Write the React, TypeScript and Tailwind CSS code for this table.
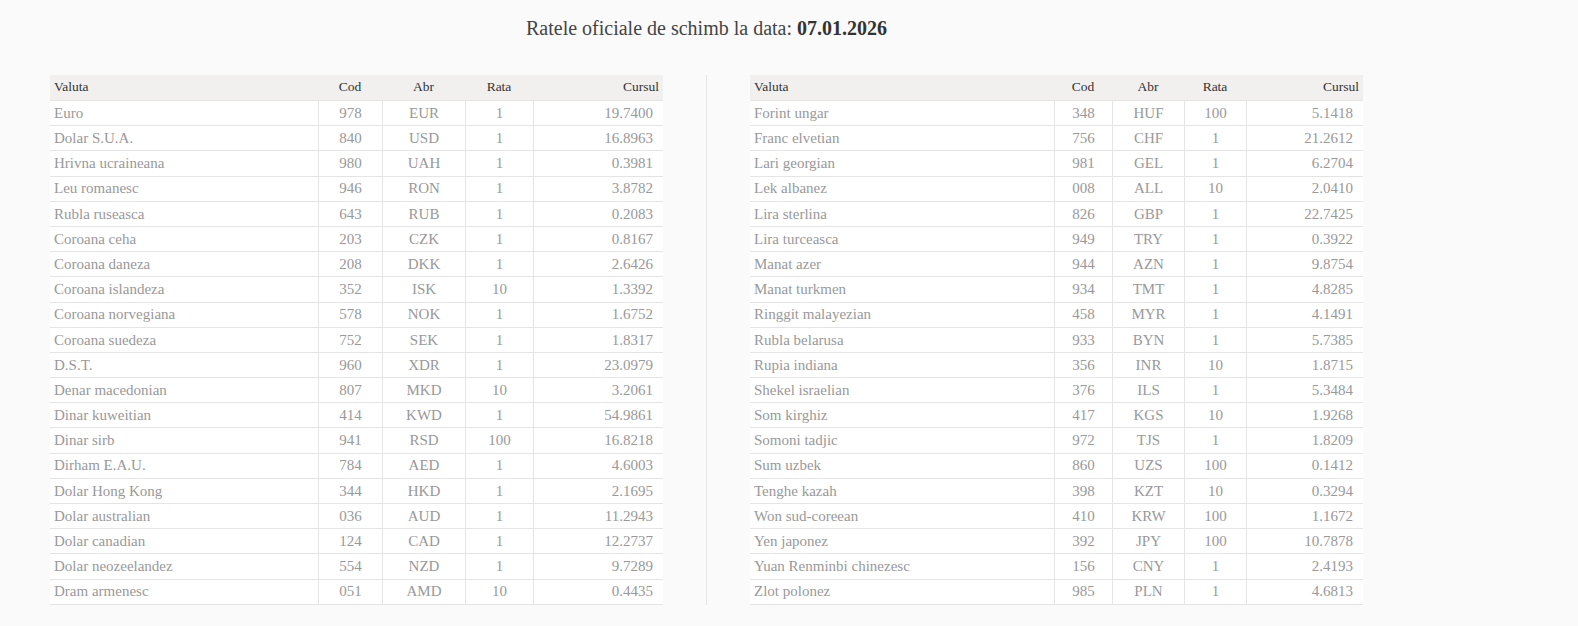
import React from 'react'

type Rate = [string, string, string, string, string]

const left: Rate[] = [
  ['Euro', '978', 'EUR', '1', '19.7400'],
  ['Dolar S.U.A.', '840', 'USD', '1', '16.8963'],
  ['Hrivna ucraineana', '980', 'UAH', '1', '0.3981'],
  ['Leu romanesc', '946', 'RON', '1', '3.8782'],
  ['Rubla ruseasca', '643', 'RUB', '1', '0.2083'],
  ['Coroana ceha', '203', 'CZK', '1', '0.8167'],
  ['Coroana daneza', '208', 'DKK', '1', '2.6426'],
  ['Coroana islandeza', '352', 'ISK', '10', '1.3392'],
  ['Coroana norvegiana', '578', 'NOK', '1', '1.6752'],
  ['Coroana suedeza', '752', 'SEK', '1', '1.8317'],
  ['D.S.T.', '960', 'XDR', '1', '23.0979'],
  ['Denar macedonian', '807', 'MKD', '10', '3.2061'],
  ['Dinar kuweitian', '414', 'KWD', '1', '54.9861'],
  ['Dinar sirb', '941', 'RSD', '100', '16.8218'],
  ['Dirham E.A.U.', '784', 'AED', '1', '4.6003'],
  ['Dolar Hong Kong', '344', 'HKD', '1', '2.1695'],
  ['Dolar australian', '036', 'AUD', '1', '11.2943'],
  ['Dolar canadian', '124', 'CAD', '1', '12.2737'],
  ['Dolar neozeelandez', '554', 'NZD', '1', '9.7289'],
  ['Dram armenesc', '051', 'AMD', '10', '0.4435'],
]

const right: Rate[] = [
  ['Forint ungar', '348', 'HUF', '100', '5.1418'],
  ['Franc elvetian', '756', 'CHF', '1', '21.2612'],
  ['Lari georgian', '981', 'GEL', '1', '6.2704'],
  ['Lek albanez', '008', 'ALL', '10', '2.0410'],
  ['Lira sterlina', '826', 'GBP', '1', '22.7425'],
  ['Lira turceasca', '949', 'TRY', '1', '0.3922'],
  ['Manat azer', '944', 'AZN', '1', '9.8754'],
  ['Manat turkmen', '934', 'TMT', '1', '4.8285'],
  ['Ringgit malayezian', '458', 'MYR', '1', '4.1491'],
  ['Rubla belarusa', '933', 'BYN', '1', '5.7385'],
  ['Rupia indiana', '356', 'INR', '10', '1.8715'],
  ['Shekel israelian', '376', 'ILS', '1', '5.3484'],
  ['Som kirghiz', '417', 'KGS', '10', '1.9268'],
  ['Somoni tadjic', '972', 'TJS', '1', '1.8209'],
  ['Sum uzbek', '860', 'UZS', '100', '0.1412'],
  ['Tenghe kazah', '398', 'KZT', '10', '0.3294'],
  ['Won sud-coreean', '410', 'KRW', '100', '1.1672'],
  ['Yen japonez', '392', 'JPY', '100', '10.7878'],
  ['Yuan Renminbi chinezesc', '156', 'CNY', '1', '2.4193'],
  ['Zlot polonez', '985', 'PLN', '1', '4.6813'],
]

function RatesTable({ rows, widths }: { rows: Rate[]; widths: number[] }) {
  return (
    <table className="w-[613px] table-fixed border-separate border-spacing-0 bg-white">
      <colgroup>
        {widths.map((w, i) => (
          <col key={i} style={{ width: w }} />
        ))}
      </colgroup>
      <thead>
        <tr className="bg-[#f1f0ef] text-[13.5px] text-[#333]">
          <th className="h-[26px] border-b border-[#e4e4e4] pl-1 text-left font-normal">Valuta</th>
          <th className="h-[26px] border-b border-[#e4e4e4] text-center font-normal">Cod</th>
          <th className="h-[26px] border-b border-[#e4e4e4] text-center font-normal">Abr</th>
          <th className="h-[26px] border-b border-[#e4e4e4] text-center font-normal">Rata</th>
          <th className="h-[26px] border-b border-[#e4e4e4] pr-1 text-right font-normal">Cursul</th>
        </tr>
      </thead>
      <tbody className="text-[15px] text-[#999]">
        {rows.map(([name, code, abbr, rate, value]) => (
          <tr key={abbr}>
            <td className="h-[25.2px] border-b border-[#e4e4e4] pl-1 text-left whitespace-nowrap">{name}</td>
            <td className="h-[25.2px] border-b border-l border-[#e4e4e4] text-center">{code}</td>
            <td className="h-[25.2px] border-b border-l border-[#e4e4e4] text-center">{abbr}</td>
            <td className="h-[25.2px] border-b border-l border-[#e4e4e4] text-center">{rate}</td>
            <td className="h-[25.2px] border-b border-l border-[#e4e4e4] pr-[10px] text-right">{value}</td>
          </tr>
        ))}
      </tbody>
    </table>
  )
}

export default function App() {
  return (
    <div className="min-h-[626px] bg-[#fafafa] font-['Liberation_Serif',serif]">
      <div className="ml-[50px] w-[1313px]">
        <h1 className="pt-[14px] text-center text-[20px] leading-[28px] text-[#444]">
          Ratele oficiale de schimb la data: <b className="font-bold text-[#333]">07.01.2026</b>
        </h1>
        <div className="mt-[33px] flex items-stretch">
          <RatesTable rows={left} widths={[268, 64, 83, 68, 130]} />
          <div className="mx-[43px] w-px bg-[#e8e8e8]" />
          <RatesTable rows={right} widths={[304, 58, 72, 62, 117]} />
        </div>
      </div>
    </div>
  )
}
